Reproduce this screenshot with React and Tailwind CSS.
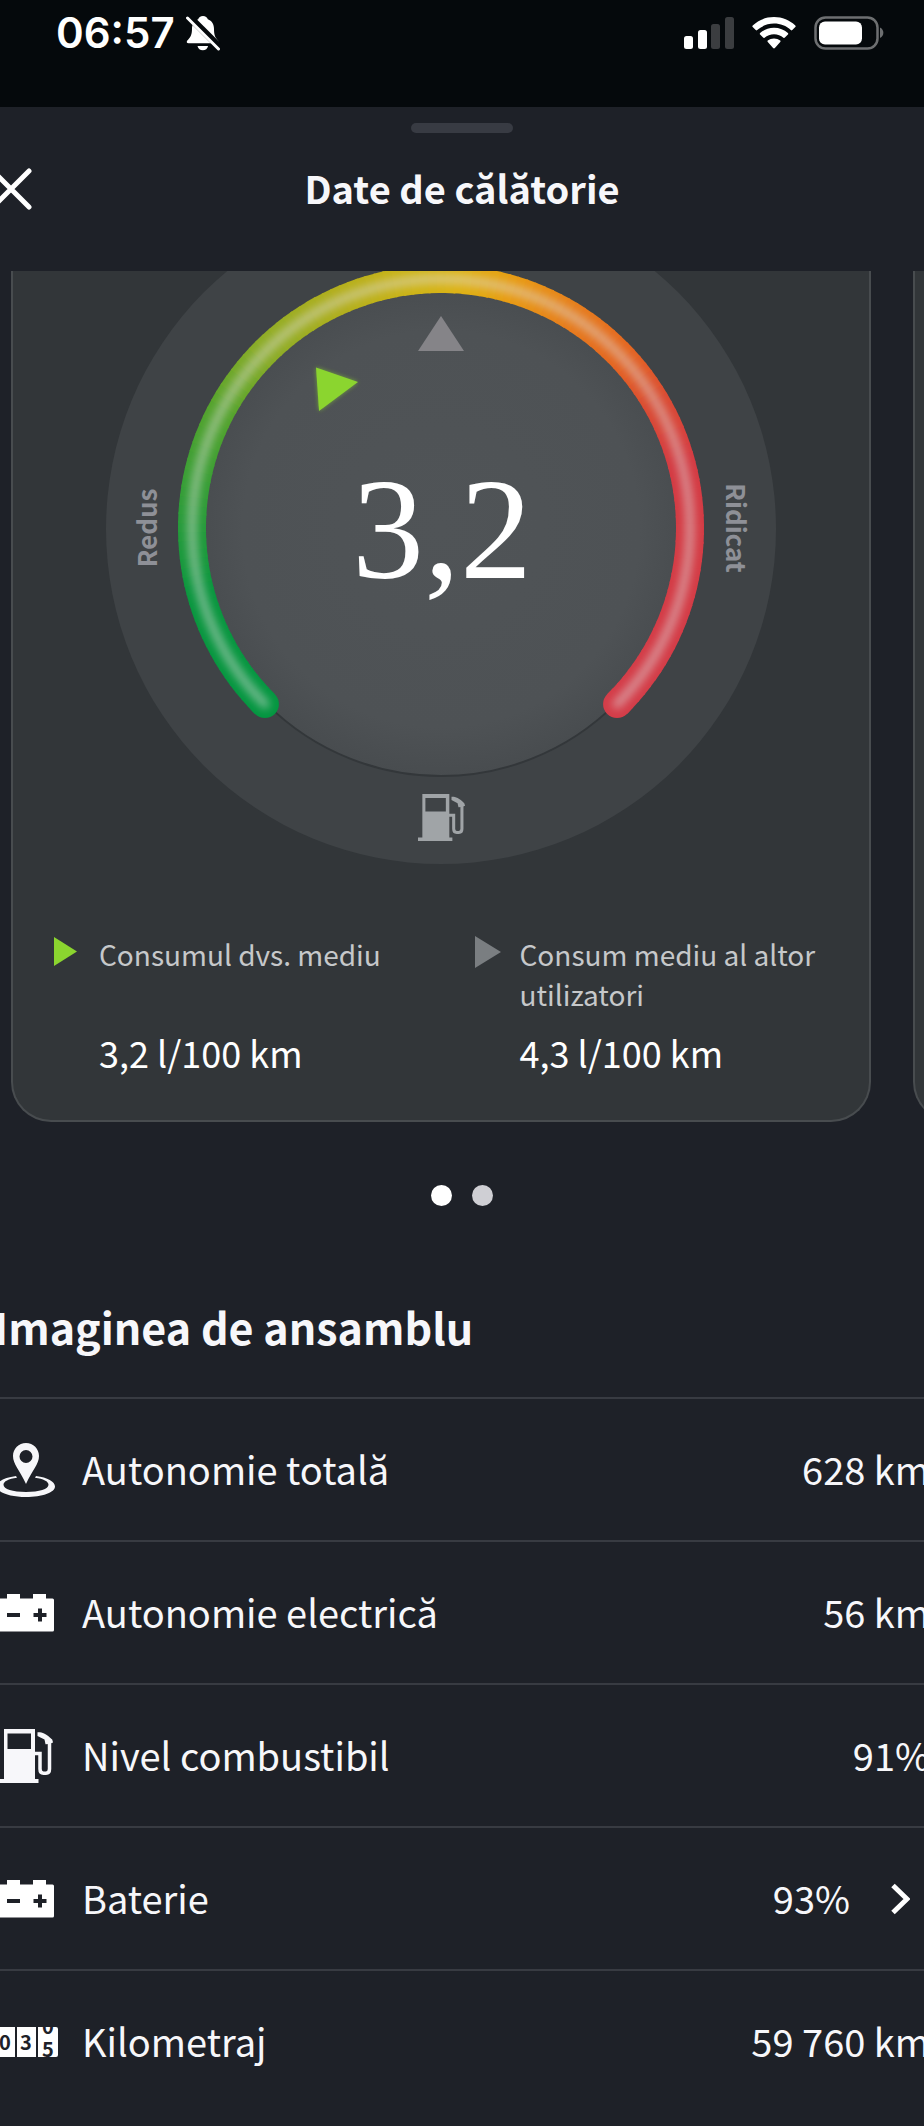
import React, { useState } from 'react';

const GAUGE = { cx: 335, cy: 257, radius: 249 };

// Colour stops along the scale, degrees clockwise from 12 o'clock
const SCALE_STOPS = [
  [-135, [4, 150, 64]],
  [-105, [10, 150, 62]],
  [-85, [46, 156, 56]],
  [-62, [84, 163, 44]],
  [-45, [138, 172, 38]],
  [-25, [176, 174, 28]],
  [-5, [208, 180, 22]],
  [5, [222, 178, 20]],
  [16, [232, 156, 18]],
  [32, [230, 124, 28]],
  [46, [228, 102, 32]],
  [60, [218, 74, 50]],
  [75, [212, 58, 66]],
  [135, [212, 60, 72]],
];

const pointAt = (deg, radius = GAUGE.radius) => {
  const rad = (deg * Math.PI) / 180;
  return [GAUGE.cx + radius * Math.sin(rad), GAUGE.cy - radius * Math.cos(rad)];
};

const arcPath = (from, to) => {
  const [x1, y1] = pointAt(from);
  const [x2, y2] = pointAt(to);
  const large = to - from > 180 ? 1 : 0;
  return `M${x1} ${y1}A${GAUGE.radius} ${GAUGE.radius} 0 ${large} 1 ${x2} ${y2}`;
};

const colorAt = (deg) => {
  const last = SCALE_STOPS.length - 1;
  const i = Math.min(last, Math.max(1, SCALE_STOPS.findIndex(([d]) => d >= deg)));
  const [d0, c0] = SCALE_STOPS[i - 1];
  const [d1, c1] = SCALE_STOPS[i];
  const t = (deg - d0) / (d1 - d0);
  return `rgb(${c0.map((c, k) => Math.round(c + (c1[k] - c) * t)).join(',')})`;
};

const segments = Array.from({ length: 135 }, (_, i) => -135 + i * 2);

const BellOffIcon = () => (
  <svg className="h-9 w-9" viewBox="0 0 36 36" fill="#fff" aria-hidden="true">
    <path d="M18 1c2.500 0 4.300 1.300 4.800 3.300 4.200 1.500 6.200 5.300 6.200 9.700 0 6 1.300 8.700 4 11.500.8.900.7 2.800-1 2.800H3.500c-1.700 0-2.300-1.500-1.200-2.800C5.200 22.500 7 20 7 14c0-4.400 2-8.200 6.200-9.700C13.700 2.300 15.500 1 18 1z" />
    <path d="M12.500 31h10.600c-.6 2.700-2.600 4.300-5.300 4.300s-4.700-1.600-5.300-4.300z" />
    <path d="M3 .5 36 33.500" stroke="#05090c" strokeWidth="7" />
    <path d="M2.500 3 33.500 34" stroke="#fff" strokeWidth="3" strokeLinecap="round" />
  </svg>
);

const SignalIcon = () => (
  <svg className="h-8 w-[50px]" viewBox="0 0 50 32" aria-hidden="true">
    <rect x="0" y="19" width="9" height="13" rx="2.500" fill="#fff" />
    <rect x="14" y="13" width="9" height="19" rx="2.500" fill="#fff" />
    <rect x="27" y="7" width="9" height="25" rx="2.500" fill="#3b3d40" />
    <rect x="41" y="0" width="9" height="32" rx="2.500" fill="#3b3d40" />
  </svg>
);

const WifiIcon = () => (
  <svg className="h-8 w-11" viewBox="0 0 44 32" fill="#fff" aria-hidden="true">
    <path d="M22 0c8.300 0 15.700 3.200 21.300 8.500.5.500.5 1 0 1.500l-3 3c-.5.500-1 .5-1.500 0C34.300 9 28.500 6.600 22 6.600S9.700 9 5.200 13c-.5.500-1 .5-1.500 0l-3-3c-.5-.5-.5-1 0-1.500C6.300 3.200 13.700 0 22 0z" />
    <path d="M22 10.800c5.400 0 10.200 2 13.900 5.300.5.500.5 1 0 1.500l-3 3c-.5.500-1 .5-1.500.1-2.500-2.200-5.800-3.400-9.400-3.400s-6.900 1.200-9.400 3.400c-.5.400-1 .4-1.500-.1l-3-3c-.5-.5-.5-1 0-1.500 3.700-3.300 8.500-5.300 13.900-5.300z" />
    <path d="M22 21.400c2.400 0 4.500.8 6.200 2.200.5.400.5 1 0 1.500l-5.300 5.900c-.5.600-1.300.6-1.800 0l-5.300-5.900c-.5-.5-.5-1.100 0-1.500 1.700-1.400 3.800-2.200 6.200-2.200z" />
  </svg>
);

const PhoneBatteryIcon = () => (
  <svg className="h-[34px] w-[70px]" viewBox="0 0 70 34" aria-hidden="true">
    <rect x="1.500" y="1.500" width="62" height="31" rx="10" fill="none" stroke="#6d6f71" strokeWidth="2.500" />
    <rect x="5" y="5.500" width="43" height="23" rx="6" fill="#fff" />
    <path d="M66 11.500c4.500 2.500 4.500 8 0 10.500z" fill="#6d6f71" />
  </svg>
);

const PumpShape = () => (
  <>
    <path
      fillRule="evenodd"
      d="M5 0h31v50h3.500v4H0v-4h5zM8.500 4.500V20H32V4.500z"
    />
    <path
      d="M35 24.500h6V40c0 3 1.500 4.200 3.500 4.200h2.500c2 0 3.500-1.200 3.500-4.200V13"
      fill="none"
      stroke="currentColor"
      strokeWidth="3.500"
    />
    <path d="M38.500 3.200c3.500-.4 8.500 1 14.700 7.300l.9 3-4 1.500-3.600.2-1-4.700-7-3.500z" />
  </>
);

const PumpIcon = () => (
  <svg className="h-[54px] w-[54px]" viewBox="0 0 54 54" fill="currentColor" aria-hidden="true">
    <PumpShape />
  </svg>
);

const RangeIcon = () => (
  <svg className="h-[54px] w-[60px]" viewBox="0 0 60 54" fill="currentColor" aria-hidden="true">
    <path
      fillRule="evenodd"
      d="M30 0c7.300 0 13 5.700 13 13 0 8-6.500 14-13 28-6.500-14-13-20-13-28C17 5.700 22.700 0 30 0zm0 7a6.500 6.500 0 1 0 0 13 6.500 6.500 0 0 0 0-13z"
    />
    <path
      fillRule="evenodd"
      d="M20 33C8.500 34.500 1 38.500 1 43.500 1 49.500 14 54 30 54s29-4.500 29-10.500c0-5-7.500-9-19-10.500l-1 1.800c8.500 1 13.500 3.700 13.500 7 0 4.200-9 7.200-22.500 7.200S7.500 46 7.500 41.800c0-3.300 5-6 13.500-7z"
    />
  </svg>
);

const CarBatteryIcon = () => (
  <svg className="h-[38px] w-[55px]" viewBox="0 0 55 38" aria-hidden="true">
    <path
      d="M1.500 4.500H8V0h13v4.500h13V0h13v4.500h6.500q1.500 0 1.500 1.500v30q0 1.500-1.500 1.500h-52Q0 37.500 0 36V6q0-1.500 1.500-1.500z"
      fill="#fff"
    />
    <path d="M8 21h13M34.500 21h13M41 14.500v13" stroke="#1e2128" strokeWidth="4" />
  </svg>
);

const OdometerIcon = () => (
  <svg className="h-[30px] w-16" viewBox="0 0 64 30" aria-hidden="true">
    <path d="M2 0h19v30H2q-2 0-2-2V2q0-2 2-2zM23 0h19v30H23zM44 0h18q2 0 2 2v26q0 2-2 2H44z" fill="#fff" />
    <g className="font-['Noto_Sans_CJK_SC',sans-serif] font-bold" fill="#1e2128" fontSize="20" textAnchor="middle">
      <text x="11" y="23">0</text>
      <text x="32" y="23">3</text>
      <text x="54" y="7">0</text>
      <text x="54" y="30">5</text>
    </g>
  </svg>
);

const overview = [
  { label: 'Autonomie totală', value: '628 km', Icon: RangeIcon },
  { label: 'Autonomie electrică', value: '56 km', Icon: CarBatteryIcon },
  { label: 'Nivel combustibil', value: '91%', Icon: PumpIcon },
  { label: 'Baterie', value: '93%', Icon: CarBatteryIcon, href: '#baterie' },
  { label: 'Kilometraj', value: '59 760 km', Icon: OdometerIcon },
];

const ConsumptionGauge = ({ value }) => (
  <svg className="mx-auto block w-[670px] max-w-full" viewBox="0 0 670 593" role="img" aria-label="Consum mediu">
    <defs>
      <radialGradient id="dial" gradientUnits="userSpaceOnUse" cx="335" cy="258" r="248">
        <stop offset="0" stopColor="#505457" />
        <stop offset="0.8" stopColor="#4e5255" />
        <stop offset="1" stopColor="#484c4f" />
      </radialGradient>
      <filter id="soft" x="-10%" y="-10%" width="120%" height="120%">
        <feGaussianBlur stdDeviation="4" />
      </filter>
      <filter id="glow" x="-30%" y="-30%" width="160%" height="160%">
        <feGaussianBlur stdDeviation="2" />
      </filter>
    </defs>

    <circle cx="335" cy="258" r="335" fill="#3f4346" />
    <circle cx="335" cy="258" r="247" fill="url(#dial)" stroke="#33373a" strokeWidth="2" />

    {/* Scale */}
    <path d={arcPath(-135, -134)} stroke={colorAt(-135)} strokeWidth="28" strokeLinecap="round" />
    <path d={arcPath(134, 135)} stroke={colorAt(135)} strokeWidth="28" strokeLinecap="round" />
    {segments.map((deg) => (
      <path
        key={deg}
        d={arcPath(deg, Math.min(deg + 2.5, 135))}
        fill="none"
        stroke={colorAt(deg + 1)}
        strokeWidth="28"
      />
    ))}
    <path
      d={arcPath(-135, 135)}
      fill="none"
      stroke="#dcdcdc"
      strokeOpacity="0.5"
      strokeWidth="9"
      strokeLinecap="round"
      filter="url(#soft)"
    />

    {/* Markers */}
    <path d="M335 45 358 80h-46z" fill="#858488" />
    <path d="M210 96.500 252 111 213 140z" fill="#8bd52f" opacity="0.6" filter="url(#glow)" />
    <path d="M210 96.500 252 111 213 140z" fill="#8bd52f" />

    <g className="font-['Liberation_Sans_Narrow','Noto_Sans_CJK_SC',sans-serif] font-bold" fill="#8e9097" fontSize="26" textAnchor="middle">
      <text transform="translate(51 257) rotate(-90)">Redus</text>
      <text transform="translate(620 257) rotate(90)">Ridicat</text>
    </g>
    <text className="font-['Liberation_Serif',serif]" x="336" y="307" fill="#fff" fontSize="144" textAnchor="middle">
      {value}
    </text>

    <g transform="translate(312 523) scale(0.87)" fill="#a0a4a7" color="#a0a4a7">
      <PumpShape />
    </g>
  </svg>
);

const LegendItem = ({ marker, label, value }) => (
  <div className="flex gap-[17px]">
    <svg className="mt-0.5 h-8 w-7 shrink-0" viewBox="0 0 28 32" aria-hidden="true">
      {marker}
    </svg>
    <div className="flex flex-col justify-between">
      <p className="text-[28px] leading-10 text-[#c6c8ca]">{label}</p>
      <p className="mt-3.5 text-[36px] leading-12 text-white">{value}</p>
    </div>
  </div>
);

const OverviewRow = ({ label, value, Icon, href }) => {
  const content = (
    <>
      <span className="flex w-16 shrink-0 justify-center">
        <Icon />
      </span>
      <span className="flex-1 pb-0.5">{label}</span>
      <span className="pb-0.5 whitespace-nowrap">{value}</span>
      {href && (
        <svg className="mr-5 ml-4 h-8 w-5" viewBox="0 0 20 32" fill="none" stroke="#fff" strokeWidth="5" aria-hidden="true">
          <path d="M3 2.500 17 16 3 29.500" />
        </svg>
      )}
    </>
  );

  return (
    <li className="h-[143px] border-t-2 border-[#383b42]">
      {href ? (
        <a href={href} className="-mx-1.5 flex h-full items-center gap-6">{content}</a>
      ) : (
        <div className="-mx-1.5 flex h-full items-center gap-6">{content}</div>
      )}
    </li>
  );
};

const App = () => {
  const [slide, setSlide] = useState(0);

  return (
    <div className="min-h-screen overflow-hidden bg-[#1e2128] font-['Noto_Sans_CJK_SC','Noto_Sans',sans-serif] text-[#f7f7fa]">
      {/* Status bar */}
      <div className="flex h-[107px] items-start justify-between bg-[#05090c] pt-[15px] pr-10 pl-14">
        <div className="flex items-center gap-2.5">
          <span className="font-['Inter',sans-serif] text-[42px] leading-9 font-semibold text-white">06:57</span>
          <BellOffIcon />
        </div>
        <div className="flex h-9 items-center gap-[18px]">
          <SignalIcon />
          <WifiIcon />
          <PhoneBatteryIcon />
        </div>
      </div>

      {/* Sheet header */}
      <header className="h-[164px] pt-4">
        <div className="mx-auto h-2.5 w-[102px] rounded-full bg-[#383b43]" />
        <div className="mt-7 flex h-14 items-center justify-between">
          <button type="button" aria-label="Închide" className="-ml-2.5 h-11 w-11">
            <svg className="h-11 w-11" viewBox="0 0 44 44" stroke="#fff" strokeWidth="5" strokeLinecap="round" aria-hidden="true">
              <path d="M3 4 39 40M39 4 3 40" />
            </svg>
          </button>
          <h1 className="pb-0.5 text-[38px] leading-14 font-bold">Date de călătorie</h1>
          <div className="w-[34px]" />
        </div>
      </header>

      {/* Carousel */}
      <section className="flex gap-[42px] overflow-hidden pl-[11px]">
        <article className="w-[calc(100%-53px)] shrink-0 rounded-b-[40px] border-2 border-t-0 border-[#484c4f] bg-[#323639] pb-11">
          <ConsumptionGauge value="3,2" />
          <div className="mt-[70px] grid grid-cols-2 gap-x-10 pr-3.5 pl-[41px]">
            <LegendItem
              marker={<path d="M0 1 23 15.500 0 30z" fill="#8bd52f" />}
              label="Consumul dvs. mediu"
              value="3,2 l/100 km"
            />
            <LegendItem
              marker={<path d="M0 0 26 16 0 32z" fill="#7a7e81" />}
              label="Consum mediu al altor utilizatori"
              value="4,3 l/100 km"
            />
          </div>
        </article>
        <article className="w-[calc(100%-53px)] shrink-0 rounded-b-[40px] border-2 border-t-0 border-[#484c4f] bg-[#323639]" />
      </section>

      <div className="flex h-[146px] items-center justify-center gap-5">
        {[0, 1].map((i) => (
          <button
            key={i}
            type="button"
            aria-label={`Pagina ${i + 1}`}
            onClick={() => setSlide(i)}
            className={`h-[21px] w-[21px] rounded-full ${slide === i ? 'bg-white' : 'bg-[#cfcfd4]'}`}
          />
        ))}
      </div>

      {/* Overview */}
      <h2 className="-ml-1.5 pt-[26px] pb-[38px] text-[43px] leading-[65px] font-bold">Imaginea de ansamblu</h2>
      <ul className="text-[38px] leading-14">
        {overview.map((item) => (
          <OverviewRow key={item.label} {...item} />
        ))}
      </ul>
    </div>
  );
};

export default App;
